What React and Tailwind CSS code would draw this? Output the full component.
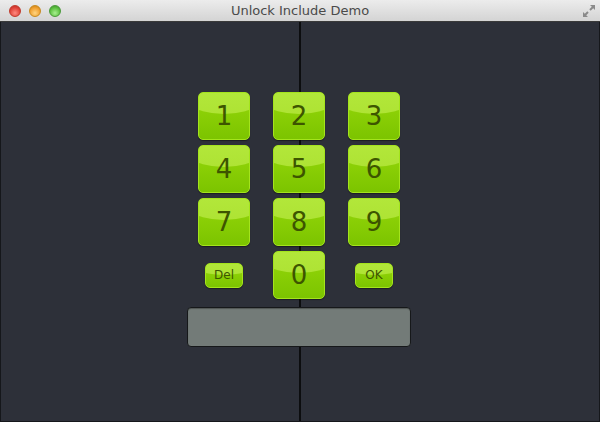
import React from "react";

function Key({ label, small }) {
  return (
    <div
      className={
        "relative overflow-hidden rounded-[5px] border border-[#a4e41c] bg-[linear-gradient(#96d80a,#7cc400)] flex items-center justify-center shadow-[0_1px_1px_rgba(0,0,0,0.4)] " +
        (small ? "w-[38px] h-[25px] rounded-[4px]" : "w-[52px] h-[48px]")
      }
    >
      <div
        className={
          "absolute left-[-60%] w-[220%] rounded-[50%] bg-[linear-gradient(#bcf048,#aee334)] " +
          (small ? "top-[-120%] h-[170%]" : "top-[-110%] h-[155%]")
        }
      />
      <span
        className={
          "relative text-[#3d5500] font-['DejaVu_Sans',sans-serif] leading-none " +
          (small ? "text-[12px]" : "text-[26px]")
        }
      >
        {label}
      </span>
    </div>
  );
}

export default function App() {
  return (
    <div className="w-[600px] h-[422px] flex flex-col bg-[#2d3039] font-['DejaVu_Sans',sans-serif]">
      <div className="relative h-[22px] flex items-center justify-center border-b border-[#3a3a3a] bg-[linear-gradient(#ececec,#d4d4d4)]">
        <div className="absolute left-[9px] top-[5px] flex gap-[8px]">
          <div className="w-[12px] h-[12px] rounded-full border border-[#c0392b] bg-[radial-gradient(circle_at_50%_70%,#ff8a80,#e0443a_60%,#b52a22)]" />
          <div className="w-[12px] h-[12px] rounded-full border border-[#c88a1e] bg-[radial-gradient(circle_at_50%_70%,#ffd580,#f0a030_60%,#c07a10)]" />
          <div className="w-[12px] h-[12px] rounded-full border border-[#4a9a3a] bg-[radial-gradient(circle_at_50%_70%,#a8f090,#5cc040_60%,#3a8a28)]" />
        </div>
        <span className="text-[13px] text-[#4a4a4a]">Unlock Include Demo</span>
        <svg className="absolute right-[4px] top-[4px]" width="14" height="14" viewBox="0 0 14 14">
          <path d="M8 1h5v5l-1.8-1.8-2.5 2.5-1.4-1.4 2.5-2.5z" fill="#8a8a8a" />
          <path d="M6 13H1V8l1.8 1.8 2.5-2.5 1.4 1.4-2.5 2.5z" fill="#8a8a8a" />
        </svg>
      </div>
      <div className="relative flex-1 flex border-x border-[#15171b] border-b">
        <div className="w-[300px] h-full border-r-2 border-[#0c0d0f]" />
        <div className="flex-1" />
        <div className="absolute left-[186px] top-[70px] flex flex-col items-center">
          <div className="grid grid-cols-[52px_52px_52px] gap-x-[23px] gap-y-[5px]">
            <Key label="1" />
            <Key label="2" />
            <Key label="3" />
            <Key label="4" />
            <Key label="5" />
            <Key label="6" />
            <Key label="7" />
            <Key label="8" />
            <Key label="9" />
            <div className="flex items-center justify-center">
              <Key label="Del" small />
            </div>
            <Key label="0" />
            <div className="flex items-center justify-center">
              <Key label="OK" small />
            </div>
          </div>
          <div className="mt-[8px] w-[224px] h-[40px] rounded-[4px] border border-[#16181a] bg-[#737b78] shadow-[inset_0_1px_1px_rgba(0,0,0,0.3)]" />
        </div>
      </div>
    </div>
  );
}
